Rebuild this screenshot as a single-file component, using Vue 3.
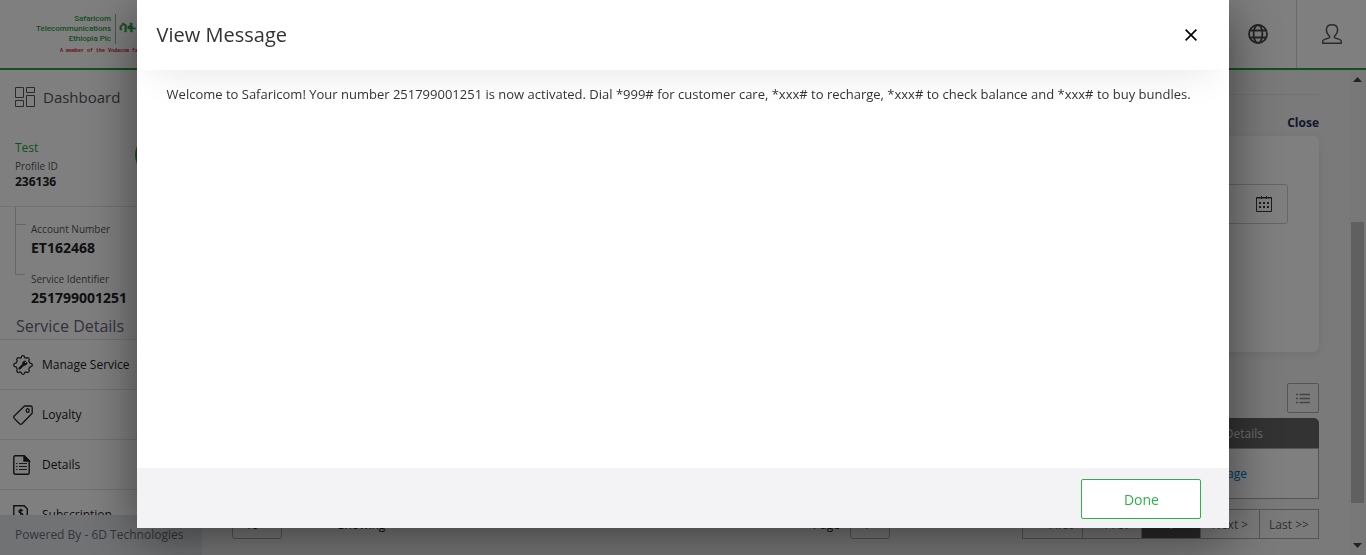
<script setup>
const menu = [
  { id: 'manage', label: 'Manage Service' },
  { id: 'loyalty', label: 'Loyalty' },
  { id: 'details', label: 'Details' },
  { id: 'subscription', label: 'Subscription' },
]
const pages = ['<< First', '< Prev', '1', 'Next >', 'Last >>']
</script>

<template>
  <div class="app">
    <header class="topbar">
      <a class="brand" href="#">
        <span class="brand-row">
          <span class="brand-name">Safaricom<br />Telecommunications<br />Ethiopia Plc</span>
          <span class="brand-local">ሳፋ</span>
        </span>
        <span class="brand-tag">A member of the Vodacom family</span>
      </a>
      <nav class="tools">
        <button class="tool globe" type="button" aria-label="Language">
          <svg width="20" height="20" viewBox="0 0 20 20" fill="none" stroke="#484848" stroke-width="1.8">
            <circle cx="10" cy="10" r="9" />
            <ellipse cx="10" cy="10" rx="4.4" ry="9" />
            <path d="M1.8 6.5h16.4M1.8 13.5h16.4" />
          </svg>
        </button>
        <button class="tool user" type="button" aria-label="Account">
          <svg width="20" height="20" viewBox="0 0 20 20" fill="none" stroke="#555" stroke-width="1.4" stroke-linejoin="round">
            <path d="M7.6 12.2C5.6 10.6 4.4 8 4.4 5.4 4.6 2.3 6.8.7 10 .7s5.4 1.6 5.6 4.7c0 2.600-1.200 5.200-3.200 6.800v1.500l5.300 1.900c1 .4 1.600 1 1.600 2v1.700H.7v-1.700c0-1 .6-1.600 1.600-2l5.300-1.900z" />
          </svg>
        </button>
      </nav>
    </header>

    <div class="columns">
      <aside class="sidebar">
        <div class="side-scroll">
          <a class="dashboard" href="#">
            <svg width="20" height="20" viewBox="0 0 20 20" fill="none" stroke="#555" stroke-width="1">
              <path d="M.5.5h8v10h-8zM11.5.5h8v5h-8zM.5 13.5h8v6h-8zM11.5 8.5h8v11h-8z" />
            </svg>
            <span>Dashboard</span>
          </a>
          <section class="profile">
            <div>
              <div class="name">Test</div>
              <div class="label">Profile ID</div>
              <div class="pid">236136</div>
            </div>
            <span class="avatar"></span>
          </section>
          <section class="tree">
            <div class="node">
              <div class="label">Account Number</div>
              <div class="value">ET162468</div>
            </div>
            <div class="node">
              <div class="label">Service Identifier</div>
              <div class="value">251799001251</div>
            </div>
          </section>
          <h2 class="side-title">Service Details</h2>
          <ul class="menu">
            <li v-for="m in menu" :key="m.id">
              <a href="#">
                <svg v-if="m.id === 'manage'" width="20" height="20" viewBox="0 0 20 20" fill="none" stroke="#222" stroke-width="1.2" stroke-linejoin="round">
                  <path d="M8.300 2.600Q8.400.7 10 .7t1.700 1.900l1.400.6q1.500-1.200 2.600-.1t.1 2.600l.9 2.200q2.600.5 2.600 2.100t-2.600 2.100l-.9 2.200q1.200 1.500 0 2.600t-2.700 0l-1.400.6Q11.600 19.300 10 19.300t-1.700-1.800l-1.400-.6q-1.500 1.200-2.600.1t-.1-2.700l-.9-2.200Q.7 11.600.7 10t2.600-2.100l.9-2.200Q3 4.200 4.200 3.100t2.700.1z" />
                  <path d="M6.600 13.400l4-4" stroke-width="2.200" stroke-linecap="round" />
                  <path d="M9.600 8.600c0-1.900 1.500-2.900 3.100-2.500l-1.300 1.500 1 1 1.600-1.300c.3 1.700-.8 3-2.600 2.900z" fill="#222" stroke-width=".8" />
                </svg>
                <svg v-else-if="m.id === 'loyalty'" width="20" height="20" viewBox="0 0 20 20" fill="none" stroke="#222" stroke-width="1.3" stroke-linejoin="round">
                  <path d="M11.5 1h6q1.700 0 1.700 1.700v5.600L9 18.800q-1.200 1-2.400 0L1.200 13.400q-1-1.200 0-2.400z" />
                  <ellipse cx="14.700" cy="5.500" rx="1.500" ry="1.900" />
                </svg>
                <svg v-else-if="m.id === 'details'" width="20" height="20" viewBox="0 0 20 20" fill="none" stroke="#222" stroke-width="1.4">
                  <path d="M2.300.8h8.900l5 5v11.900q0 1.500-1.500 1.500H2.300Q.8 19.200.8 17.700V2.300Q.8.8 2.300.8z" />
                  <path d="M11 .8v5.200h5.200z" fill="#222" />
                  <path d="M3 8.500h1.500M6 8.500h8M3 11.500h1.500M6 11.500h8M3 14.500h1.500M6 14.500h8" stroke="#333" stroke-width="1" />
                </svg>
                <svg v-else width="20" height="20" viewBox="0 0 20 20" fill="none" stroke="#222" stroke-width="1.4">
                  <path d="M1 .8h10.200L14.300 4v15.200H.8V.8z" />
                  <path d="M9.800 5.800C9 4.800 5.900 4.600 5.900 6.500s4 1.200 4 3.200-3.300 2-4.200.8M7.800 3.800v8.600" />
                </svg>
                <span>{{ m.label }}</span>
              </a>
            </li>
          </ul>
        </div>
        <footer class="powered">Powered By - 6D Technologies</footer>
      </aside>

      <main class="content">
        <hr />
        <a class="close-link" href="#">Close</a>
        <section class="filter">
          <div class="date">
            <input type="text" aria-label="Date" />
            <svg width="16" height="16" viewBox="0 0 16 16" fill="none" stroke="#3a3a3a">
              <path d="M.5 1.5h15v14H.5z" />
              <path d="M0 2h16M5.500 0v3M10.500 0v3" />
              <path d="M3 7h2M7 7h2M11 7h2M3 11h2M7 11h2M11 11h2" stroke-width="2" />
            </svg>
          </div>
        </section>
        <div class="list-tools">
          <button class="list-btn" type="button" aria-label="Columns">
            <svg width="14" height="11" viewBox="0 0 14 11" fill="none" stroke="#888" stroke-width="1.4">
              <path d="M0 1.500h2M3.500 1.500H14M0 5.500h2M3.500 5.500H14M0 9.500h2M3.500 9.500H14" />
            </svg>
          </button>
        </div>
        <table class="grid">
          <thead>
            <tr><th>Date</th><th>Details</th></tr>
          </thead>
          <tbody>
            <tr><td></td><td><a href="#">View Message</a></td></tr>
          </tbody>
        </table>
        <div class="pager">
          <select class="size" aria-label="Rows"><option>10</option></select>
          <span class="showing">Showing</span>
          <span class="page-label">Page</span>
          <select class="page-no" aria-label="Page"><option>1</option></select>
          <div class="pages">
            <button v-for="p in pages" :key="p" type="button" :class="{ active: p === '1' }">{{ p }}</button>
          </div>
        </div>
      </main>

      <div class="scrollbar">
        <svg width="9" height="5" viewBox="0 0 9 5"><path d="M0 5L4.500 0 9 5z" fill="#444" /></svg>
        <span class="thumb"></span>
        <svg width="9" height="5" viewBox="0 0 9 5"><path d="M0 0h9L4.500 5z" fill="#444" /></svg>
      </div>
    </div>

    <div class="overlay">
      <div class="modal" role="dialog" aria-modal="true" aria-labelledby="modal-title">
        <div class="modal-head">
          <h1 id="modal-title">View Message</h1>
          <button class="x" type="button" aria-label="Close">
            <svg width="12" height="12" viewBox="0 0 12 12" stroke="#000" stroke-width="1.6"><path d="M.6.6l10.800 10.800M11.400.6L.6 11.400" /></svg>
          </button>
        </div>
        <div class="modal-body">
          Welcome to Safaricom! Your number 251799001251 is now activated. Dial *999# for customer care, *xxx# to recharge, *xxx# to check balance and *xxx# to buy bundles.
        </div>
        <div class="modal-foot">
          <button class="done" type="button">Done</button>
        </div>
      </div>
    </div>
  </div>
</template>

<style>
body { overflow: hidden; }
</style>

<style scoped>
* { box-sizing: border-box; }
.app {
  height: 100vh;
  display: flex;
  flex-direction: column;
  font-family: "Open Sans", "Noto Sans", sans-serif;
  font-size: 12px;
  color: #222;
  background: #fff;
}
a { color: inherit; text-decoration: none; }
button, input, select { font: inherit; }

.topbar {
  flex: none;
  height: 70px;
  border-bottom: 2px solid #26a043;
  display: flex;
  justify-content: space-between;
}
.brand { padding: 14px 0 0 36px; font-family: Roboto, sans-serif; }
.brand-row { display: flex; align-items: flex-start; }
.brand-name {
  font-size: 8px;
  line-height: 10px;
  font-weight: 500;
  color: #26a043;
  text-align: right;
  padding-right: 4px;
  border-right: 1px solid #7fbf8c;
}
.brand-local { color: #26a043; font-size: 14px; font-weight: 700; padding-left: 3px; line-height: 26px; }
.brand-tag { display: block; padding: 3px 0 0 24px; font: 700 5px/8px "Liberation Mono", monospace; color: #c22; }
.tools { display: flex; }
.tool { display: flex; align-items: center; justify-content: center; border: 0; background: none; padding: 0; width: 76px; }
.user { width: 70px; border-left: 1px solid #c4e0c4; }

.columns { flex: 1; min-height: 0; display: flex; }
.sidebar { flex: none; width: 202px; display: flex; flex-direction: column; }
.side-scroll { flex: 1; min-height: 0; overflow: hidden; }
.dashboard { display: flex; align-items: center; gap: 8px; height: 54px; padding-left: 15px; font-size: 15px; color: #555; }
.profile { display: flex; justify-content: space-between; height: 83px; padding: 14px 27px 0 15px; border-bottom: 1px solid #e4e4e4; }
.name { color: #26a043; font-size: 12px; line-height: 20px; }
.label { font-size: 10px; line-height: 16px; color: #555; }
.pid { font-size: 12px; font-weight: 700; line-height: 16px; }
.avatar { width: 40px; height: 40px; border-radius: 50%; background: #26a043; margin-top: -3px; }
.tree { padding-left: 15px; }
.node { height: 50px; padding: 14px 0 0 15px; border-left: 1px solid #ccc; position: relative; }
.node::before { content: ""; position: absolute; left: 0; top: 17px; width: 10px; border-top: 1px solid #ccc; }
.node:last-child { border-color: transparent; }
.node:last-child::before { left: -1px; }
.node:last-child::after { content: ""; position: absolute; left: -1px; top: 0; height: 17px; border-left: 1px solid #ccc; }
.value { font-size: 14px; font-weight: 700; line-height: 22px; }
.side-title { margin: 0; padding: 6px 0 0 16px; height: 33px; font-size: 16px; line-height: 26px; font-weight: 400; color: #667; border-bottom: 1px solid #e4e4e4; }
.menu { list-style: none; margin: 0; padding: 0; }
.menu a { display: flex; align-items: center; gap: 9px; height: 50px; padding-left: 13px; border-bottom: 1px solid #e4e4e4; color: #222; }
.powered { flex: none; height: 40px; line-height: 40px; padding-left: 15px; color: #666c74; background: #e2e4e8; white-space: nowrap; }

.content { flex: 1; min-width: 0; padding: 24px 30px 0 30px; background: #f4f4f5; display: flex; flex-direction: column; }
hr { flex: none; width: 100%; margin: 0; border: 0; border-top: 1px solid #e4e4e4; }
.close-link { align-self: flex-end; padding-top: 18px; height: 41px; line-height: 20px; font-weight: 700; color: #1f3158; }
.filter { height: 216px; padding: 48px 31px 0; border-radius: 6px; background: #fff; box-shadow: 0 2px 8px rgba(0, 0, 0, 0.08); }
.date { display: flex; align-items: center; width: 300px; margin-left: auto; height: 40px; border: 1px solid #ccc; border-radius: 3px; padding-right: 15px; }
.date input { flex: 1; min-width: 0; border: 0; background: none; }
.list-tools { display: flex; justify-content: flex-end; padding: 31px 0 5px; }
.list-btn { display: flex; align-items: center; justify-content: center; width: 32px; height: 30px; padding: 0; border: 1px solid #aaa; border-radius: 2px; background: none; }
.grid { width: 100%; border-collapse: separate; border-spacing: 0; background: #fff; }
.grid th { height: 30px; padding: 0; background: #666; color: #ddd; font-weight: 400; }
.grid th:first-child { border-top-left-radius: 5px; }
.grid th:last-child { width: 145px; border-top-right-radius: 5px; }
.grid td { height: 51px; padding: 0 71px 0 0; border: 1px solid #aaa; border-left: 0; text-align: right; white-space: nowrap; }
.grid td a { color: #0078c8; }
.pager { display: flex; align-items: center; padding-top: 10px; }
.pager select { appearance: none; height: 30px; border: 1px solid #aaa; border-radius: 3px; background: none; padding: 0 12px; color: #222; }
.size { width: 50px; }
.showing { margin-left: 56px; }
.page-label { margin-left: auto; margin-right: 10px; }
.page-no { width: 40px; margin-right: 132px; }
.pages { display: flex; border: 1px solid #aaa; }
.pages button { width: 59px; height: 28px; padding: 0; border: 0; border-left: 1px solid #aaa; background: none; color: #666; white-space: nowrap; }
.pages button:first-child { border-left: 0; }
.pages .active { background: #555; color: #fff; }

.scrollbar { flex: none; width: 17px; background: #f1f1f1; display: flex; flex-direction: column; align-items: center; padding: 7px 0; }
.thumb { width: 13px; flex: 0 0 281px; background: #c1c1c1; margin: 140px 0 auto; }

.overlay { position: fixed; inset: 0; background: rgba(0, 0, 0, 0.5); }
.modal { width: 80%; margin: 0 auto; background: #fff; box-shadow: 0 10px 50px rgba(0, 0, 0, 0.5); }
.modal-head { display: flex; align-items: center; justify-content: space-between; height: 70px; padding: 0 32px 0 20px; box-shadow: 0 16px 40px -16px rgba(0, 0, 0, 0.12); }
.modal-head h1 { margin: 0; font-size: 20px; font-weight: 400; line-height: 26px; color: #333; }
.x { display: flex; padding: 0; border: 0; background: none; }
.modal-body { min-height: 398px; padding: 14px 30px; font-size: 13px; line-height: 20px; color: #333; }
.modal-foot { display: flex; align-items: center; justify-content: flex-end; height: 60px; padding: 2px 28px 0; background: #f3f3f6; }
.done { width: 120px; height: 40px; border: 1px solid #2db24c; border-radius: 2px; background: #fff; color: #2db24c; font-size: 14px; }
</style>
